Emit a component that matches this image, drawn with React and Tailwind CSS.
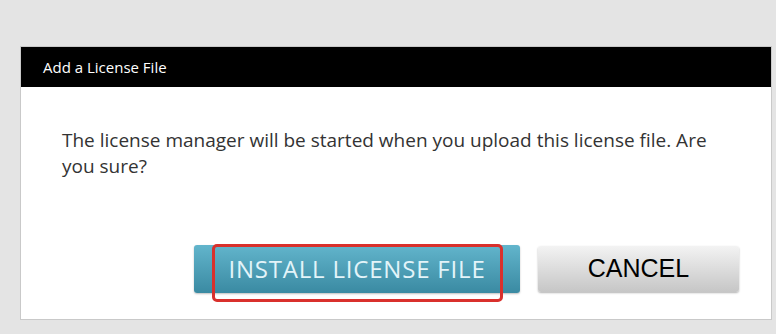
const App = () => {
  return (
    <div className="w-[776px] h-[334px] bg-[#e4e4e4] pt-[46px] pl-[20px] overflow-hidden">
      <div className="w-[752px] h-[274px] bg-white border border-[#c9c9c9] flex flex-col">
        <div className="h-[40px] bg-black flex items-center px-[22px] text-white text-[15px] font-['Open_Sans',sans-serif]">
          Add a License File
        </div>
        <div className="pt-[40px] pl-[41px] w-[700px] text-[19px] leading-[26px] text-[#333] font-['Open_Sans',sans-serif]">
          The license manager will be started when you upload this license file. Are you sure?
        </div>
        <div className="flex justify-end items-center gap-[18px] pr-[32px] mt-auto mb-[26px]">
          <div className="relative">
            <button className="w-[326px] h-[48px] rounded-[3px] bg-gradient-to-b from-[#62b5cc] to-[#3a8aa2] text-[#e3f4f9] text-[24px] tracking-[0.8px] font-['Open_Sans',sans-serif] shadow-[0_1px_2px_rgba(0,0,0,0.25)]">
              INSTALL LICENSE FILE
            </button>
            <div className="absolute left-[18px] top-[-1px] w-[291px] h-[58px] border-[3px] border-[#d9302c] rounded-[5px]"></div>
          </div>
          <button className="w-[201px] h-[46px] rounded-[3px] bg-gradient-to-b from-[#f3f3f3] to-[#c6c6c6] text-black text-[25px] font-['Liberation_Sans',sans-serif] shadow-[0_1px_2px_rgba(0,0,0,0.3)]">
            CANCEL
          </button>
        </div>
      </div>
    </div>
  )
}

export default App;
